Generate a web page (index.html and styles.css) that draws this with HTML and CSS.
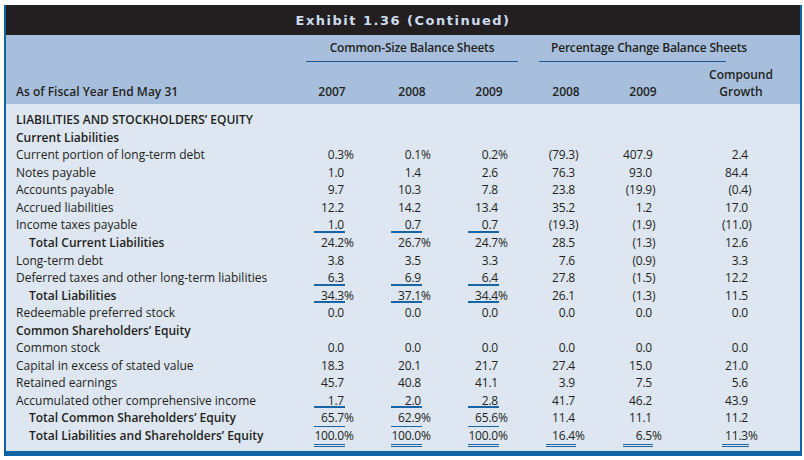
FILE: index.html
```html
<!DOCTYPE html>
<html lang="en">
<head>
<meta charset="utf-8">
<title>Exhibit 1.36 (Continued)</title>
<link rel="stylesheet" href="styles.css">
</head>
<body>
<div class="exhibit">
  <div class="title">Exhibit 1.36 (Continued)</div>
  <div class="head">
    <div class="grp g1">Common-Size Balance Sheets</div>
    <div class="grp g2">Percentage Change Balance Sheets</div>
    <div class="asof">As of Fiscal Year End May 31</div>
    <div class="yr first">2007</div>
    <div class="yr">2008</div>
    <div class="yr">2009</div>
    <div class="yr">2008</div>
    <div class="yr">2009</div>
    <div class="yr cg">Compound<br>Growth</div>
  </div>
  <div class="body">
    <div class="row sec"><div class="lbl">LIABILITIES AND STOCKHOLDERS’ EQUITY</div></div>
    <div class="row sec"><div class="lbl">Current Liabilities</div></div>
    <div class="row"><div class="lbl">Current portion of long-term debt</div><div class="n">0.3<span class="h">%</span></div><div class="n">0.1<span class="h">%</span></div><div class="n">0.2<span class="h">%</span></div><div class="n">(79.3<span class="h">)</span></div><div class="n">407.9</div><div class="n">2.4</div></div>
    <div class="row"><div class="lbl">Notes payable</div><div class="n">1.0</div><div class="n">1.4</div><div class="n">2.6</div><div class="n">76.3</div><div class="n">93.0</div><div class="n">84.4</div></div>
    <div class="row"><div class="lbl">Accounts payable</div><div class="n">9.7</div><div class="n">10.3</div><div class="n">7.8</div><div class="n">23.8</div><div class="n">(19.9<span class="h">)</span></div><div class="n">(0.4<span class="h">)</span></div></div>
    <div class="row"><div class="lbl">Accrued liabilities</div><div class="n">12.2</div><div class="n">14.2</div><div class="n">13.4</div><div class="n">35.2</div><div class="n">1.2</div><div class="n">17.0</div></div>
    <div class="row"><div class="lbl">Income taxes payable</div><div class="n u">1.0</div><div class="n u">0.7</div><div class="n u">0.7</div><div class="n">(19.3<span class="h">)</span></div><div class="n">(1.9<span class="h">)</span></div><div class="n">(11.0<span class="h">)</span></div></div>
    <div class="row tot"><div class="lbl">Total Current Liabilities</div><div class="n">24.2<span class="h">%</span></div><div class="n">26.7<span class="h">%</span></div><div class="n">24.7<span class="h">%</span></div><div class="n">28.5</div><div class="n">(1.3<span class="h">)</span></div><div class="n">12.6</div></div>
    <div class="row"><div class="lbl">Long-term debt</div><div class="n">3.8</div><div class="n">3.5</div><div class="n">3.3</div><div class="n">7.6</div><div class="n">(0.9<span class="h">)</span></div><div class="n">3.3</div></div>
    <div class="row"><div class="lbl">Deferred taxes and other long-term liabilities</div><div class="n u">6.3</div><div class="n u">6.9</div><div class="n u">6.4</div><div class="n">27.8</div><div class="n">(1.5<span class="h">)</span></div><div class="n">12.2</div></div>
    <div class="row tot"><div class="lbl">Total Liabilities</div><div class="n u">34.3<span class="h">%</span></div><div class="n u">37.1<span class="h">%</span></div><div class="n u">34.4<span class="h">%</span></div><div class="n">26.1</div><div class="n">(1.3<span class="h">)</span></div><div class="n">11.5</div></div>
    <div class="row"><div class="lbl">Redeemable preferred stock</div><div class="n">0.0</div><div class="n">0.0</div><div class="n">0.0</div><div class="n">0.0</div><div class="n">0.0</div><div class="n">0.0</div></div>
    <div class="row sec"><div class="lbl">Common Shareholders’ Equity</div></div>
    <div class="row"><div class="lbl">Common stock</div><div class="n">0.0</div><div class="n">0.0</div><div class="n">0.0</div><div class="n">0.0</div><div class="n">0.0</div><div class="n">0.0</div></div>
    <div class="row"><div class="lbl">Capital in excess of stated value</div><div class="n">18.3</div><div class="n">20.1</div><div class="n">21.7</div><div class="n">27.4</div><div class="n">15.0</div><div class="n">21.0</div></div>
    <div class="row"><div class="lbl">Retained earnings</div><div class="n">45.7</div><div class="n">40.8</div><div class="n">41.1</div><div class="n">3.9</div><div class="n">7.5</div><div class="n">5.6</div></div>
    <div class="row"><div class="lbl">Accumulated other comprehensive income</div><div class="n u">1.7</div><div class="n u">2.0</div><div class="n u">2.8</div><div class="n">41.7</div><div class="n">46.2</div><div class="n">43.9</div></div>
    <div class="row tot"><div class="lbl">Total Common Shareholders’ Equity</div><div class="n t">65.7<span class="h">%</span></div><div class="n t">62.9<span class="h">%</span></div><div class="n t">65.6<span class="h">%</span></div><div class="n">11.4</div><div class="n">11.1</div><div class="n">11.2</div></div>
    <div class="row tot last"><div class="lbl">Total Liabilities and Shareholders’ Equity</div><div class="n d">100.0<span class="h">%</span></div><div class="n d">100.0<span class="h">%</span></div><div class="n d">100.0<span class="h">%</span></div><div class="n d">16.4<span class="h">%</span></div><div class="n d">6.5<span class="h">%</span></div><div class="n d">11.3<span class="h">%</span></div></div>
  </div>
</div>
</body>
</html>
```
FILE: styles.css
```css
* { box-sizing: border-box; }
body {
  margin: 0;
  background: #ffffff;
  font-family: "Open Sans", "Noto Sans", sans-serif;
  color: #231f20;
}
.exhibit {
  margin: 5px 2px 4px 4px;
  border-style: solid;
  border-color: #0e64a6;
  border-width: 0 2px 5px 2px;
  background: #dde6f1;
}
.title {
  height: 30px;
  background: #231f20;
  color: #cddcef;
  font: bold 13px/31px "DejaVu Sans", sans-serif;
  letter-spacing: 1.5px;
  text-align: center;
}
.head {
  background: #a7bfdd;
  display: grid;
  grid-template-columns: 308px 31px 77px 77px 77px 77px 96px 1fr;
  grid-template-rows: 27px 37.5px;
  padding-bottom: 4px;
  font-size: 12px;
  font-weight: 600;
  white-space: nowrap;
}
.grp {
  grid-row: 1;
  padding-top: 6px;
  line-height: 14px;
  text-align: center;
  border-bottom: 1px solid #1d5a92;
  letter-spacing: -0.2px;
}
.g1 { grid-column: 2 / 5; margin: 0 -19px 0 -8px; }
.g2 { grid-column: 5 / 8; margin: 0 23px 0 40px; padding-left: 12px; }
.asof {
  grid-row: 2;
  grid-column: 1;
  align-self: end;
  padding-left: 10px;
  line-height: 17px;
}
.yr {
  grid-row: 2;
  align-self: end;
  justify-self: end;
  width: 64px;
  margin-right: -22px;
  text-align: center;
  line-height: 17px;
}
.yr.first { margin-right: -19px; }
.yr.cg { margin-right: -24px; }
.body {
  padding: 7.7px 0 3.9px;
  font-size: 12px;
}
.row {
  display: grid;
  grid-template-columns: 308px 31px 77px 77px 77px 77px 96px 1fr;
  height: 17.55px;
  line-height: 17.55px;
  white-space: nowrap;
}
.row.last { height: 20px; }
.lbl { padding-left: 10px; }
.sec .lbl { grid-column: 1 / -1; font-weight: 600; }
.tot .lbl { padding-left: 23px; font-weight: 600; }
.n {
  justify-self: end;
  width: 31px;
  text-align: right;
  padding-right: 1px;
  letter-spacing: -0.2px;
}
.n:nth-child(5), .n:nth-child(6) { width: 30px; }
.n:nth-child(7) { width: 27px; }
.h { display: inline-block; width: 0; }
.u {
  background: linear-gradient(#1764a6, #1764a6) 0 calc(100% - 1px) / 100% 2px no-repeat;
}
.t {
  background: linear-gradient(#1764a6, #1764a6) 0 100% / 100% 1px no-repeat;
}
.d {
  background: linear-gradient(#1764a6 0 1px, transparent 1px 2px, #1764a6 2px 3px) 0 100% / 100% 3px no-repeat;
}
```
